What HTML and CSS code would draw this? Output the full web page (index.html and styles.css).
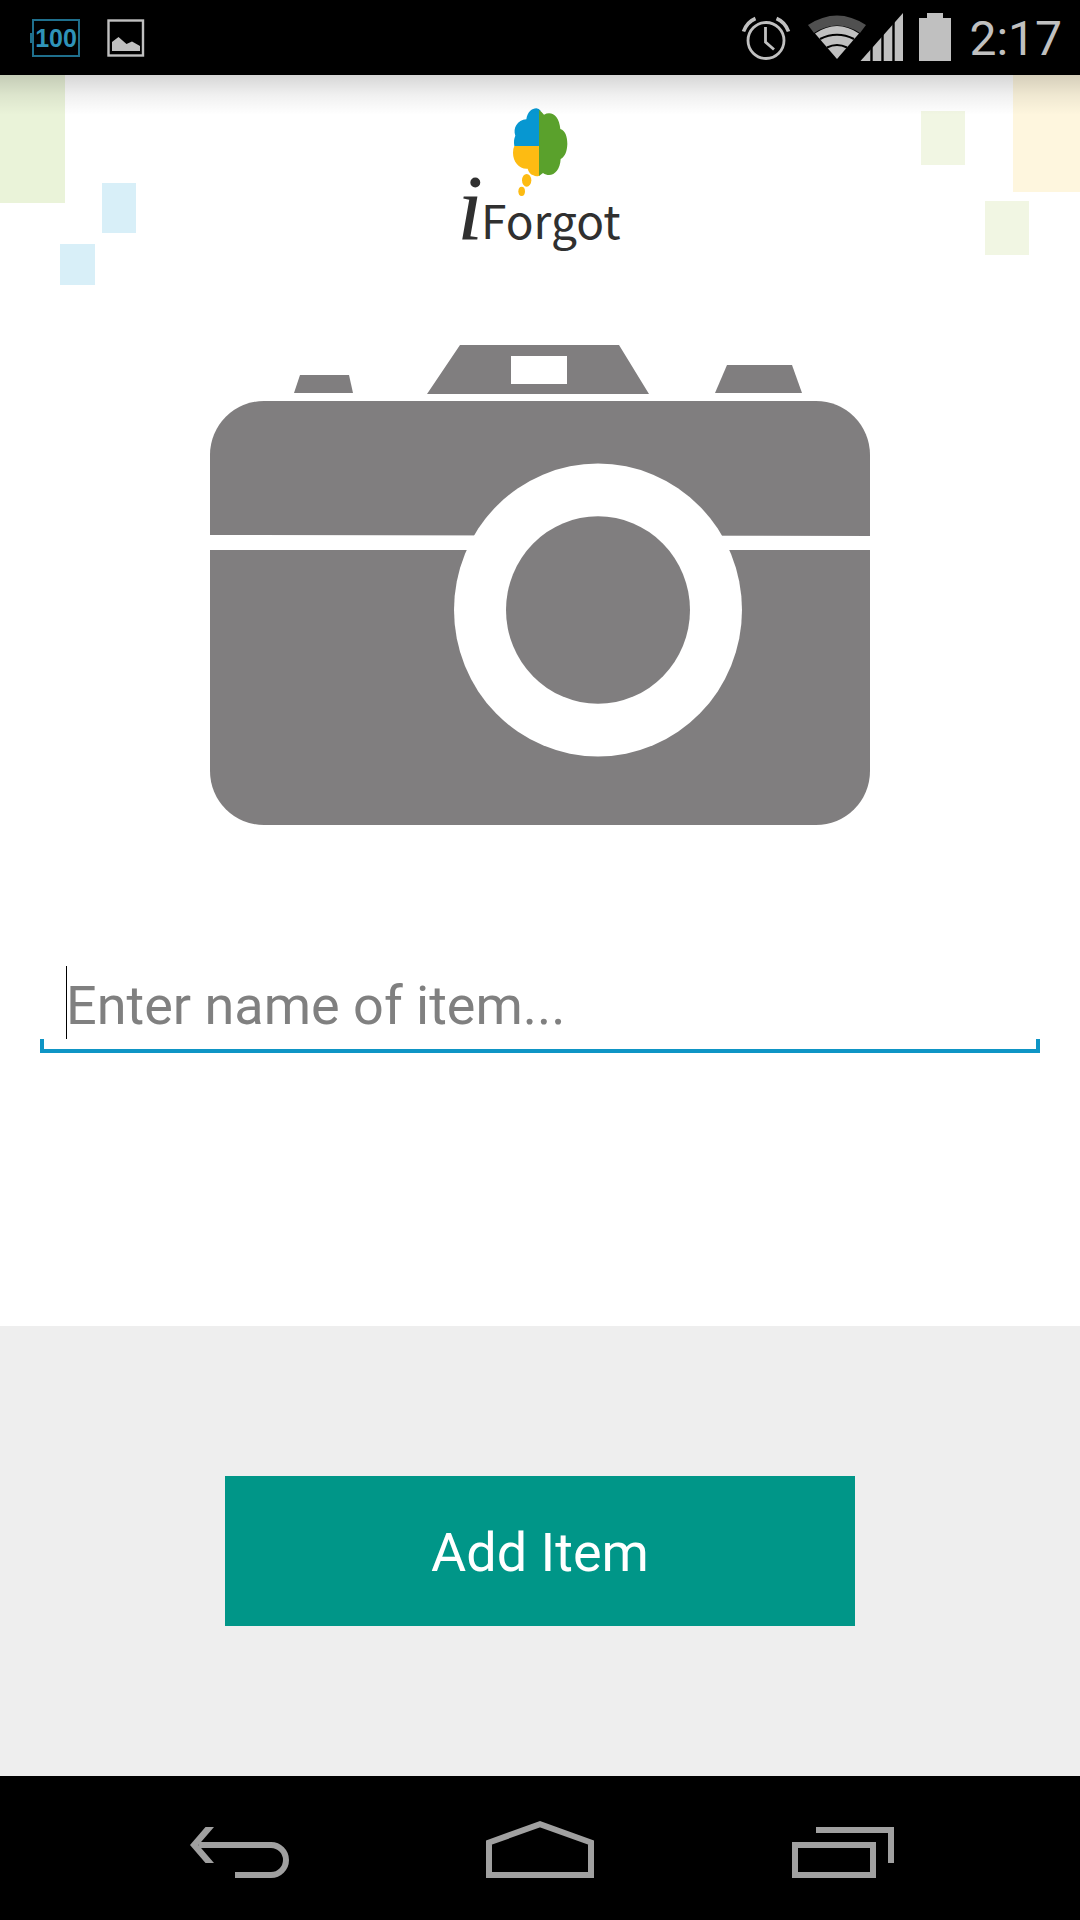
FILE: index.html
```html
<!DOCTYPE html>
<html lang="en">
<head>
<meta charset="utf-8">
<meta name="viewport" content="width=device-width, initial-scale=1">
<title>iForgot</title>
<link rel="stylesheet" href="styles.css">
</head>
<body>
<div class="screen">
  <div class="status">
    <div class="status-left">
      <span class="charge">100</span>
      <svg class="icon" width="38" height="38" viewBox="0 0 38 38" aria-hidden="true">
        <rect x="1.5" y="1.5" width="34.5" height="35" fill="none" stroke="#c0c0c0" stroke-width="2.4"/>
        <path d="M5 32V23L11.500 18 19.500 25 25 22.500 33 27V32Z" fill="#c0c0c0"/>
      </svg>
    </div>
    <div class="status-right">
      <svg class="icon" width="162" height="48" viewBox="0 0 162 48" aria-hidden="true">
        <circle cx="25" cy="27.500" r="18" fill="none" stroke="#c0c0c0" stroke-width="2.800"/>
        <path d="M24.500 14V29L33 36.500" fill="none" stroke="#c0c0c0" stroke-width="2.800"/>
        <path d="M2.500 18.500Q6 9 14.500 5.500M47.500 18.500Q44 9 35.500 5.500" fill="none" stroke="#c0c0c0" stroke-width="3.600"/>
        <path d="M67 12Q96 -7 125 12L119 20Q96 5 73 20Z" fill="#505050"/>
        <path d="M74 20.500Q96 5.500 118 20.500L96 46Z" fill="#c0c0c0"/>
        <path d="M79 26Q96 17.500 113 26M86 34.500Q96 29.500 106 34.500" fill="none" stroke="#000" stroke-width="2.200"/>
        <path d="M119.500 48L162 0V48Z" fill="#c0c0c0"/>
        <path d="M130.500 0V48M141.500 0V48M152.500 0V48" stroke="#000" stroke-width="2.400"/>
      </svg>
      <svg class="icon" width="32" height="48" viewBox="0 0 32 48" aria-hidden="true">
        <path d="M0 5H8V0H24V5H32V48H0Z" fill="#c0c0c0"/>
      </svg>
      <time class="clock">2:17</time>
    </div>
  </div>

  <header class="header">
    <span class="tile tile-green-large"></span>
    <span class="tile tile-blue-upper"></span>
    <span class="tile tile-blue-lower"></span>
    <span class="tile tile-cream"></span>
    <span class="tile tile-green-upper"></span>
    <span class="tile tile-green-lower"></span>
    <svg class="logo" width="200" height="180" viewBox="0 0 200 180" role="img" aria-label="iForgot">
      <svg width="190" height="180" viewBox="0 0 570 540">
        <path d="M298 168H223C221 155 222 145 226 137C218 115 232 90 259 88C262 66 276 55 289 55Q297 56 302 62L298 70Z" fill="#0797d1"/>
        <path d="M298 168V257Q289 261 280 256Q267 251 263 236C238 238 219 216 219 188Q219 176 223 168Z" fill="#fdbb12"/>
        <path d="M297 60Q306 66 312 74C335 61 358 78 361 117C376 122 382 140 382 162C381 184 376 199 362 207C360 246 334 266 309 249L297 258Z" fill="#5aa12c"/>
        <ellipse cx="260" cy="271" rx="14" ry="19" fill="#fdbb12"/>
        <ellipse cx="245" cy="304" rx="10" ry="14" fill="#fdbb12"/>
      </svg>
      <text class="logo-i" x="17" y="149">i</text>
      <text class="logo-name" x="41" y="149">Forgot</text>
    </svg>
  </header>

  <main class="main">
    <button class="camera" type="button" aria-label="Take a photo">
      <svg viewBox="0 0 660 481" aria-hidden="true">
        <g fill="#807e7f">
          <path d="M90 30H139L143 48H84Z"/>
          <path fill-rule="evenodd" d="M250 0H409L439 49H217ZM301 11V39H357V11Z"/>
          <path d="M517 20H582L592 48H505Z"/>
          <rect y="56" width="660" height="424" rx="54"/>
        </g>
        <path d="M0 190L660 191V205H0Z" fill="#fff"/>
        <ellipse cx="388" cy="265" rx="144" ry="146.500" fill="#fff"/>
        <ellipse cx="388" cy="265" rx="92" ry="93.700" fill="#807e7f"/>
      </svg>
    </button>
    <div class="field">
      <input class="field-input" type="text" aria-label="Item name" placeholder="Enter name of item...">
    </div>
  </main>

  <footer class="actions">
    <button class="add" type="button">Add Item</button>
  </footer>

  <nav class="nav" aria-label="System">
    <button class="nav-button" type="button" aria-label="Back">
      <svg width="120" height="72" viewBox="0 0 120 72"><path d="M19 33H91A15 15 0 0 1 91 63H55" /><path class="solid" d="M10 33L25.500 15H34L18.500 33 34 51H25.500Z"/></svg>
    </button>
    <button class="nav-button" type="button" aria-label="Home">
      <svg width="120" height="72" viewBox="0 0 120 72"><path d="M9 63V30.500L60 12.200 111 30.500V63Z"/></svg>
    </button>
    <button class="nav-button" type="button" aria-label="Recent apps">
      <svg width="120" height="72" viewBox="0 0 120 72"><path d="M15 33H93V63H15ZM36 18H111V51"/></svg>
    </button>
  </nav>
</div>
</body>
</html>
```
FILE: styles.css
```css
* { box-sizing: border-box; }

body {
  margin: 0;
  background: #fff;
  font-family: Roboto, "Noto Sans", sans-serif;
}

button {
  border: 0;
  padding: 0;
  background: none;
  font: inherit;
  cursor: pointer;
}

svg { display: block; }

.screen {
  display: flex;
  flex-direction: column;
  min-height: 100vh;
}

/* Status bar */
.status {
  display: flex;
  justify-content: space-between;
  height: 75px;
  padding: 0 18px 0 32px;
  background: #000;
  color: #c0c0c0;
}

.status-left,
.status-right {
  display: flex;
  align-items: center;
}

.status-left { gap: 27px; }
.status-right { gap: 16px; padding-bottom: 2px; }

.charge {
  position: relative;
  width: 48px;
  height: 38px;
  border: 2px solid #1f6f8c;
  color: #2f93b8;
  font: bold 25px/34px "Liberation Sans", Arial, sans-serif;
  text-align: center;
}

.charge::before {
  content: "";
  position: absolute;
  left: -4px;
  top: 12px;
  width: 3px;
  height: 10px;
  background: #1f6f8c;
}

.clock {
  margin-left: 2px;
  padding-top: 4px;
  font-size: 48px;
  line-height: 56px;
}

/* Branded header */
.header {
  position: relative;
  display: flex;
  justify-content: center;
  height: 225px;
  padding-top: 15px;
}

.header::after {
  content: "";
  position: absolute;
  inset: 0 0 auto;
  height: 40px;
  background: linear-gradient(rgba(0, 0, 0, .16), rgba(0, 0, 0, .06) 50%, rgba(0, 0, 0, 0));
}

.tile { position: absolute; }
.tile-green-large { left: 0; top: 0; width: 65px; height: 128px; background: #eaf3d9; }
.tile-blue-upper { left: 102px; top: 108px; width: 34px; height: 50px; background: #d8eff8; }
.tile-blue-lower { left: 60px; top: 169px; width: 35px; height: 41px; background: #d8eff8; }
.tile-cream { right: 0; top: 0; width: 67px; height: 117px; background: #fef6de; }
.tile-green-upper { right: 115px; top: 36px; width: 44px; height: 54px; background: #f1f6e3; }
.tile-green-lower { right: 51px; top: 126px; width: 44px; height: 54px; background: #f1f6e3; }

.logo text { fill: #303030; }
.logo-i { font: italic 94px "Liberation Serif", serif; }
.logo-name { font: 46px "Noto Sans CJK JP", "Open Sans", sans-serif; }

/* Item form */
.main {
  flex: 1;
  display: flex;
  flex-direction: column;
  align-items: center;
  gap: 140px;
  padding: 45px 40px;
}

.camera {
  width: 100%;
  max-width: 660px;
}

.field {
  position: relative;
  width: 100%;
  height: 87px;
  background:
    linear-gradient(#0f95c5, #0f95c5) left bottom / 100% 4px no-repeat,
    linear-gradient(#0f95c5, #0f95c5) left bottom / 4px 14px no-repeat,
    linear-gradient(#0f95c5, #0f95c5) right bottom / 4px 14px no-repeat;
}

/* Insertion point */
.field::before {
  content: "";
  position: absolute;
  left: 26px;
  top: 0;
  width: 1px;
  height: 73px;
  background: #000;
}

.field-input {
  display: block;
  width: 100%;
  height: 78px;
  padding: 0 26px;
  border: 0;
  outline: 0;
  background: none;
  color: #222;
  font: inherit;
  font-size: 54px;
}

.field-input::placeholder { color: #808080; opacity: 1; }

/* Add button area */
.actions {
  display: flex;
  justify-content: center;
  padding: 150px 40px;
  background: #eee;
}

.add {
  width: 100%;
  max-width: 630px;
  height: 150px;
  padding-top: 3px;
  background: #009688;
  color: #fff;
  font-size: 54px;
}

/* System navigation */
.nav {
  display: grid;
  grid-template-columns: repeat(3, minmax(0, 300px));
  justify-content: center;
  height: 144px;
  background: #000;
}

.nav-button {
  display: flex;
  align-items: center;
  justify-content: center;
}

.nav-button path {
  fill: none;
  stroke: #a0a0a0;
  stroke-width: 6;
}

.nav-button .solid {
  fill: #a0a0a0;
  stroke: none;
}
```
